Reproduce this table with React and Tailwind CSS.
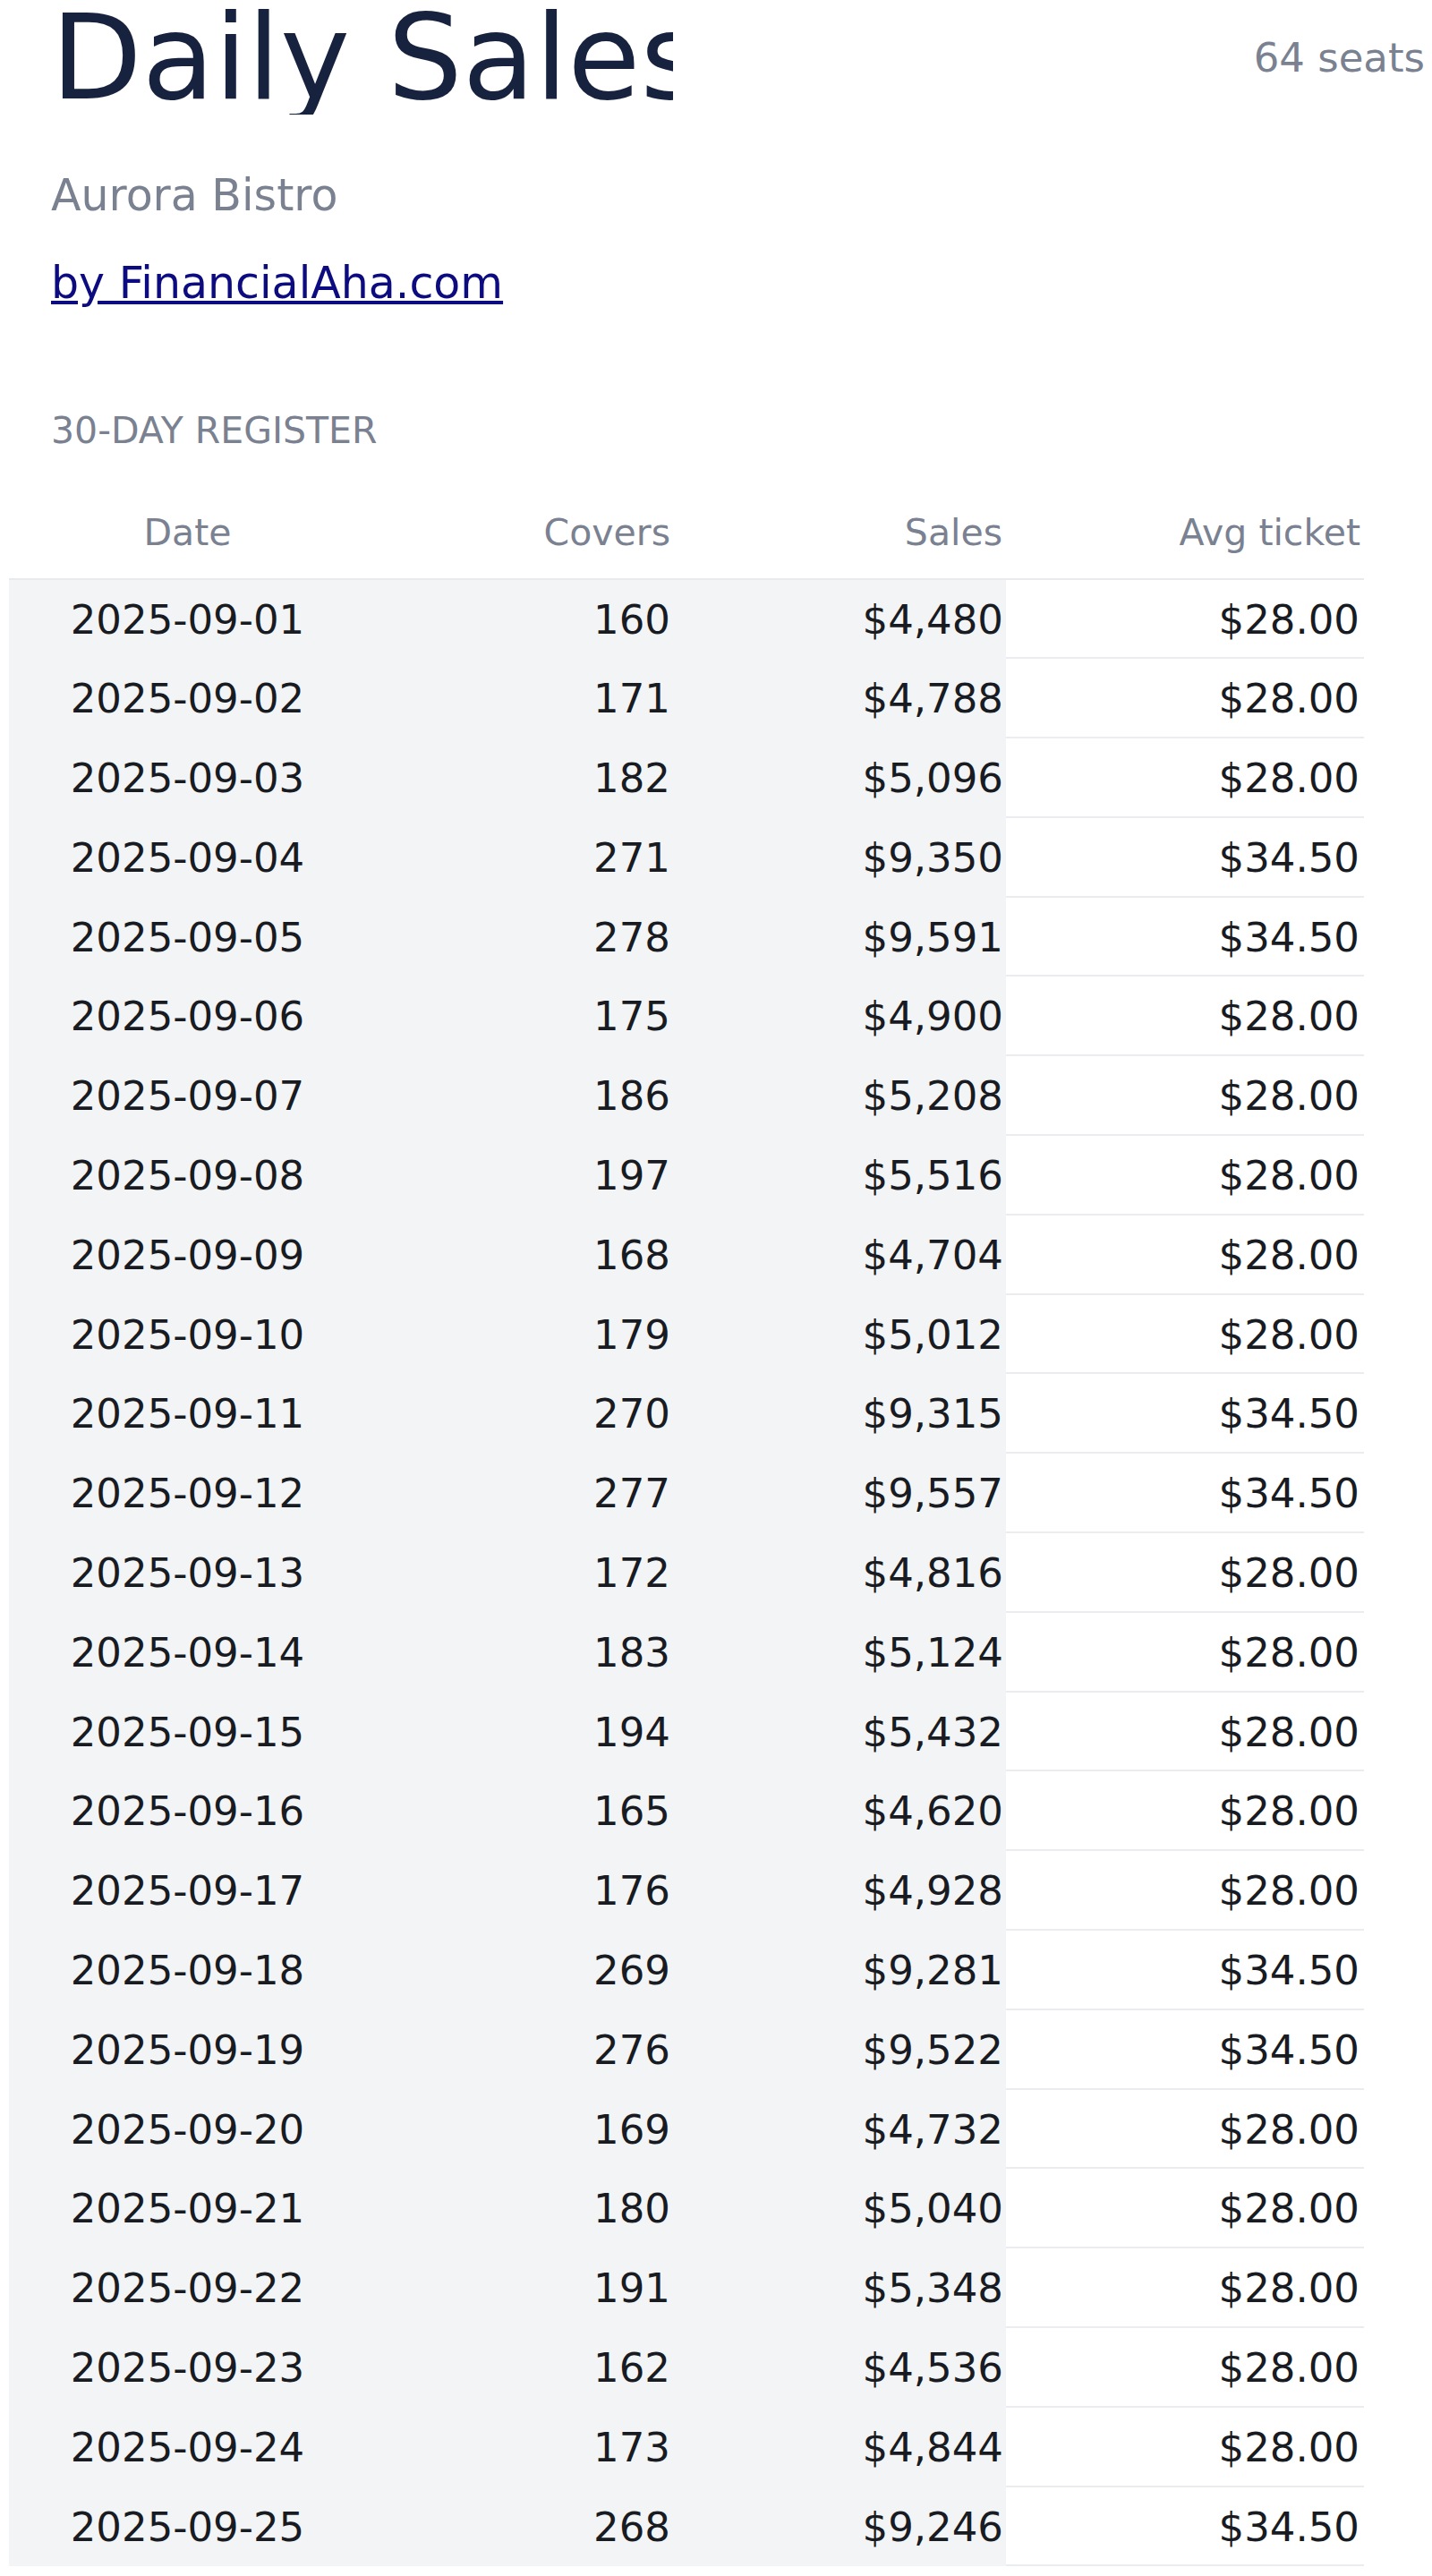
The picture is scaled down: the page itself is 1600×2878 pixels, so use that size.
const rows = [
  ["2025-09-01", "160", "$4,480", "$28.00"],
  ["2025-09-02", "171", "$4,788", "$28.00"],
  ["2025-09-03", "182", "$5,096", "$28.00"],
  ["2025-09-04", "271", "$9,350", "$34.50"],
  ["2025-09-05", "278", "$9,591", "$34.50"],
  ["2025-09-06", "175", "$4,900", "$28.00"],
  ["2025-09-07", "186", "$5,208", "$28.00"],
  ["2025-09-08", "197", "$5,516", "$28.00"],
  ["2025-09-09", "168", "$4,704", "$28.00"],
  ["2025-09-10", "179", "$5,012", "$28.00"],
  ["2025-09-11", "270", "$9,315", "$34.50"],
  ["2025-09-12", "277", "$9,557", "$34.50"],
  ["2025-09-13", "172", "$4,816", "$28.00"],
  ["2025-09-14", "183", "$5,124", "$28.00"],
  ["2025-09-15", "194", "$5,432", "$28.00"],
  ["2025-09-16", "165", "$4,620", "$28.00"],
  ["2025-09-17", "176", "$4,928", "$28.00"],
  ["2025-09-18", "269", "$9,281", "$34.50"],
  ["2025-09-19", "276", "$9,522", "$34.50"],
  ["2025-09-20", "169", "$4,732", "$28.00"],
  ["2025-09-21", "180", "$5,040", "$28.00"],
  ["2025-09-22", "191", "$5,348", "$28.00"],
  ["2025-09-23", "162", "$4,536", "$28.00"],
  ["2025-09-24", "173", "$4,844", "$28.00"],
  ["2025-09-25", "268", "$9,246", "$34.50"],
];

export default function App() {
  return (
    <div className="bg-white min-h-[2878px] font-['DejaVu_Sans',sans-serif]">
      <div className="flex items-start justify-between">
        <div className="ml-[57px] w-[695px] overflow-hidden whitespace-nowrap text-[132px] leading-[128px] text-[#17223f]">
          Daily Sales
        </div>
        <div className="mt-[42px] pr-[8px] text-[45px] leading-none text-[#7a8191] whitespace-nowrap">
          64 seats
        </div>
      </div>

      <div className="ml-[57px] mt-[65.5px] text-[49px] leading-none text-[#7a8191]">
        Aurora Bistro
      </div>
      <div className="ml-[57px] mt-[49px] text-[49px] leading-none">
        <a href="#" className="text-[#0c0c80] underline">
          by FinancialAha.com
        </a>
      </div>

      <div className="ml-[57px] mt-[120px] text-[41px] leading-none text-[#7a8191]">
        30-DAY REGISTER
      </div>

      <div className="ml-[10px] mt-[73px] w-[1514px]">
        <div className="flex border-b-2 border-[#e8eaee] pb-[30px] text-[41px] leading-none text-[#7a8191]">
          <div className="w-[399px] text-center">Date</div>
          <div className="w-[343px] pr-[3px] text-right">Covers</div>
          <div className="w-[372px] pr-[4px] text-right">Sales</div>
          <div className="w-[400px] pr-[4px] text-right">Avg ticket</div>
        </div>
        {rows.map((r) => (
          <div key={r[0]} className="flex h-[88.8px] text-[45px] leading-none text-[#181b22]">
            <div className="flex w-[1114px] bg-[#f3f4f6]">
              <div className="w-[399px] pt-[22px] text-center">{r[0]}</div>
              <div className="w-[343px] pr-[3px] pt-[22px] text-right">{r[1]}</div>
              <div className="w-[372px] pr-[3px] pt-[22px] text-right">{r[2]}</div>
            </div>
            <div className="box-border h-[88.8px] w-[400px] border-b-2 border-[#eaecf0] pr-[5px] pt-[22px] text-right">
              {r[3]}
            </div>
          </div>
        ))}
      </div>
    </div>
  );
}
